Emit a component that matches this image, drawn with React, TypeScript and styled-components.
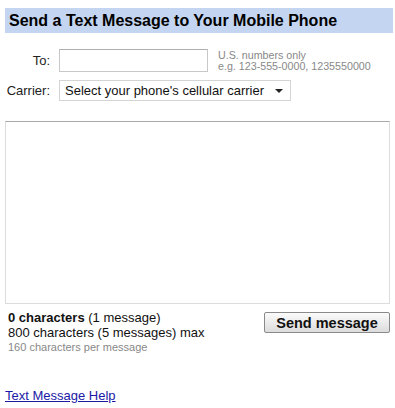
import styled, { createGlobalStyle } from "styled-components";

const GlobalStyle = createGlobalStyle`
  body {
    margin: 0;
    background: #fff;
    font-family: "Liberation Sans", Arial, sans-serif;
    color: #000;
  }
`;

const Page = styled.div`
  width: 388px;
  padding: 8px 0 0 5px;
`;

const Header = styled.h1`
  margin: 0;
  height: 25px;
  line-height: 25px;
  padding-left: 4px;
  background-color: #c3d5f1;
  font-size: 16px;
  font-weight: bold;
  color: #000;
`;

const Form = styled.div`
  display: grid;
  grid-template-columns: 45px auto 1fr;
  column-gap: 9px;
  row-gap: 8px;
  margin-top: 16px;
  align-items: center;
`;

const Label = styled.label`
  text-align: right;
  font-size: 13px;
  color: #222;
`;

const TextInput = styled.input`
  box-sizing: border-box;
  width: 149px;
  height: 23px;
  border: 1px solid #c8c8c8;
  border-top-color: #b0b0b0;
  padding: 2px;
  font-family: inherit;
  font-size: 13px;
`;

const Hint = styled.div`
  font-size: 10.7px;
  line-height: 11px;
  color: #888;
  padding-left: 1px;
`;

const Select = styled.div`
  box-sizing: border-box;
  grid-column: 2 / 4;
  width: 232px;
  height: 21px;
  display: flex;
  align-items: center;
  justify-content: space-between;
  padding: 0 7px 0 5px;
  border: 1px solid #d4d4d4;
  font-size: 13px;
  color: #111;
`;

const Caret = styled.span`
  width: 0;
  height: 0;
  border-left: 4px solid transparent;
  border-right: 4px solid transparent;
  border-top: 4px solid #222;
`;

const MessageBox = styled.textarea`
  display: block;
  box-sizing: border-box;
  width: 385px;
  height: 183px;
  margin-top: 20px;
  border: 1px solid #dcdcdc;
  border-top-color: #a8a8a8;
  resize: none;
  font-family: inherit;
  font-size: 13px;
`;

const Footer = styled.div`
  display: flex;
  justify-content: space-between;
  align-items: flex-start;
  margin-top: 6px;
  padding-left: 3px;
  width: 385px;
  box-sizing: border-box;
`;

const Counts = styled.div`
  font-size: 13px;
  line-height: 15px;
  color: #111;
`;

const Small = styled.div`
  font-size: 11px;
  line-height: 14px;
  color: #888;
`;

const SendButton = styled.button`
  box-sizing: border-box;
  width: 126px;
  height: 21px;
  margin-top: 2px;
  border: 1px solid #8a8a8a;
  border-radius: 2px;
  background: linear-gradient(#fbfbfb, #dcdcdc);
  font-family: inherit;
  font-size: 14.5px;
  font-weight: bold;
  color: #111;
  padding: 0;
`;

const HelpLink = styled.a`
  display: inline-block;
  margin-top: 34px;
  font-size: 13px;
  color: #1a1aa6;
  text-decoration: underline;
`;

export default function App() {
  return (
    <>
      <GlobalStyle />
      <Page>
        <Header>Send a Text Message to Your Mobile Phone</Header>
        <Form>
          <Label>To:</Label>
          <TextInput type="text" />
          <Hint>
            U.S. numbers only
            <br />
            e.g. 123-555-0000, 1235550000
          </Hint>
          <Label>Carrier:</Label>
          <Select>
            <span>Select your phone's cellular carrier</span>
            <Caret />
          </Select>
        </Form>
        <MessageBox />
        <Footer>
          <Counts>
            <div>
              <b>0 characters</b> (1 message)
            </div>
            <div>800 characters (5 messages) max</div>
            <Small>160 characters per message</Small>
          </Counts>
          <SendButton>Send message</SendButton>
        </Footer>
        <HelpLink href="#">Text Message Help</HelpLink>
      </Page>
    </>
  );
}
